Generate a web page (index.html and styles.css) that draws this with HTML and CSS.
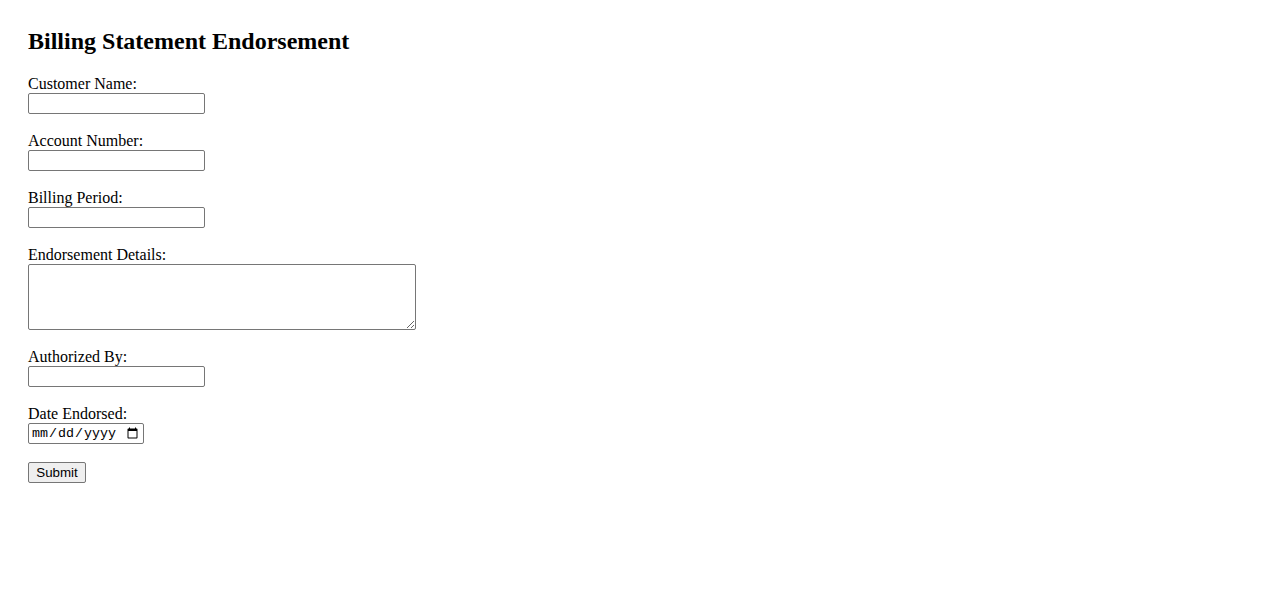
FILE: index.html
```html
<!DOCTYPE html>
<html lang="en">
<head>
  <meta charset="UTF-8">
  <title>Billing Statement Endorsement</title>
  <link rel="stylesheet" href="styles.css">
</head>
<body>
  <h2>Billing Statement Endorsement</h2>

  <form class="endorse-form">
    <div class="field">
      <label for="customerName">Customer Name:</label>
      <input type="text" id="customerName" name="customerName">
    </div>

    <div class="field">
      <label for="accountNumber">Account Number:</label>
      <input type="text" id="accountNumber" name="accountNumber">
    </div>

    <div class="field">
      <label for="billingPeriod">Billing Period:</label>
      <input type="text" id="billingPeriod" name="billingPeriod">
    </div>

    <div class="field">
      <label for="details">Endorsement Details:</label>
      <textarea id="details" name="details" rows="4" cols="50"></textarea>
    </div>

    <div class="field">
      <label for="authorizedBy">Authorized By:</label>
      <input type="text" id="authorizedBy" name="authorizedBy">
    </div>

    <div class="field">
      <label for="dateEndorsed">Date Endorsed:</label>
      <input type="date" id="dateEndorsed" name="dateEndorsed">
    </div>

    <button type="submit">Submit</button>
  </form>
</body>
</html>
```

FILE: styles.css
```css
body {
  font-family: 'Liberation Serif', 'Times New Roman', serif;
  font-size: 16px;
  margin: 0;
  padding: 28px;
  color: #000;
  background-color: #fff;
}

h2 {
  font-size: 24px;
  font-weight: bold;
  margin: 0 0 20px;
}

.field {
  display: flex;
  flex-direction: column;
  align-items: flex-start;
  margin-bottom: 18px;
}

label {
  line-height: 18px;
}

input[type="text"],
input[type="date"],
textarea {
  box-sizing: border-box;
  margin: 0;
  border: 1px solid #767676;
  border-radius: 2px;
  background-color: #fff;
}

input[type="text"] {
  width: 177px;
  height: 21px;
  padding: 1px 2px;
  font-family: 'Liberation Sans', Arial, sans-serif;
  font-size: 13.33px;
}

input[type="date"] {
  width: 116px;
  height: 21px;
  padding: 0 2px;
  font-family: 'Liberation Mono', 'Courier New', monospace;
  font-size: 13.33px;
}

textarea {
  width: 388px;
  height: 66px;
  padding: 2px;
  font-family: 'Liberation Mono', 'Courier New', monospace;
  font-size: 13.33px;
}

button {
  box-sizing: border-box;
  width: 58px;
  height: 21px;
  margin: 0;
  padding: 1px 6px;
  font-family: 'Liberation Sans', Arial, sans-serif;
  font-size: 13.33px;
  color: #000;
  background-color: #efefef;
  border: 1px solid #767676;
  border-radius: 2px;
}
```
